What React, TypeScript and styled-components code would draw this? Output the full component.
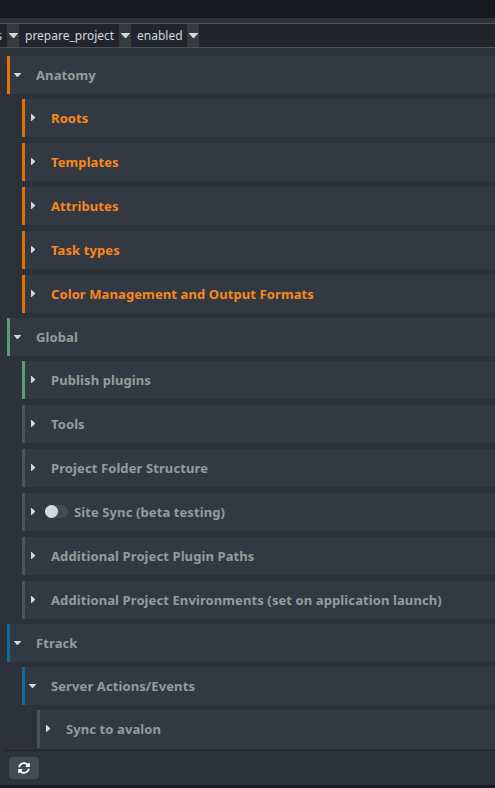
import React from "react";
import styled, { createGlobalStyle } from "styled-components";

const tones = {
  orange: "#e67300",
  green: "#56a06f",
  grey: "#4e5254",
  blue: "#106aa2",
};
type Tone = keyof typeof tones;

const GlobalStyle = createGlobalStyle`
  * { box-sizing: border-box; }
  body {
    margin: 0;
    overflow: hidden;
    background: #2c313a;
    font-family: "Noto Sans", sans-serif;
  }
`;

const Window = styled.div`
  display: flex;
  flex-direction: column;
  width: 495px;
  height: 788px;
  overflow: hidden;
  background: #2c313a;
`;

const TopStrip = styled.div`
  flex: none;
  height: 18px;
  background: #161920;
`;

const Breadcrumbs = styled.nav`
  flex: none;
  display: flex;
  height: 25px;
  margin-top: 5px;
  border: solid #4e5254;
  border-width: 1px 0;
  background: #21252b;
  color: #d3d8de;
  font-size: 12px;
  line-height: 23px;
`;

const Crumb = styled.span<{ $width: number; $clipped?: boolean }>`
  flex: none;
  display: flex;
  justify-content: ${(p) => (p.$clipped ? "flex-end" : "flex-start")};
  width: ${(p) => p.$width}px;
  padding: ${(p) => (p.$clipped ? "0 5px 0 0" : "0 0 0 6px")};
  white-space: nowrap;
`;

const CrumbMenu = styled.button`
  flex: none;
  display: flex;
  align-items: center;
  justify-content: center;
  width: 12px;
  height: 23px;
  padding: 0 0 0 1px;
  border: 0;
  background: #373a3d;
`;

const Tree = styled.main`
  flex: none;
  display: flex;
  flex-direction: column;
  gap: 5px;
  padding: 8px 0 2px 7px;
`;

const Group = styled.section`
  display: flex;
  flex-direction: column;
  gap: 5px;
`;

const Children = styled.div<{ $gap?: number }>`
  display: flex;
  flex-direction: column;
  gap: ${(p) => p.$gap ?? 6}px;
  padding-left: 15px;
`;

const Row = styled.div<{ $tone: Tone }>`
  display: flex;
  align-items: center;
  height: 38px;
  border-left: 3px solid ${(p) => tones[p.$tone]};
  background: #333942;
`;

const ArrowSlot = styled.span<{ $open?: boolean }>`
  flex: none;
  display: flex;
  width: ${(p) => (p.$open ? 22 : 20)}px;
  margin-left: ${(p) => (p.$open ? 4 : 6)}px;
  padding-bottom: ${(p) => (p.$open ? 0 : 1)}px;
`;

const Label = styled.span<{ $changed?: boolean }>`
  color: ${(p) => (p.$changed ? "#f9881c" : "#969b9e")};
  font-size: 13px;
  font-weight: 700;
  line-height: 18px;
  letter-spacing: 0.1px;
  white-space: nowrap;
`;

const Toggle = styled.span`
  flex: none;
  display: flex;
  width: 23px;
  height: 13px;
  margin: 0 6px 1px -6px;
  border-radius: 7px;
  background: #434a56;

  &::before {
    content: "";
    width: 13px;
    height: 13px;
    border-radius: 50%;
    background: #d3d8e0;
  }
`;

const Footer = styled.footer`
  flex: none;
  height: 35px;
  margin-left: 4px;
  padding: 6px 5px;
  border-top: 1px solid #21252b;
`;

const RefreshButton = styled.button`
  display: flex;
  align-items: center;
  justify-content: center;
  width: 30px;
  height: 22px;
  padding: 0;
  border: 0;
  border-radius: 3px;
  background: #434a56;
`;

const BottomStrip = styled.div`
  flex: 1;
  background: #161920;
`;

const CrumbArrow = () => (
  <svg width="9" height="5" viewBox="0 0 9 5">
    <path d="M0 0h9v.5L5 5H4L0 .5z" fill="#d3d8e0" />
  </svg>
);

const Arrow = ({ open }: { open?: boolean }) => (
  <ArrowSlot $open={open}>
    {open ? (
      <svg width="7" height="4" viewBox="0 0 7 4">
        <path d="M0 0h7v.6L3.9 4h-.8L0 .6z" fill="#d3d8e0" />
      </svg>
    ) : (
      <svg width="4" height="7" viewBox="0 0 4 7">
        <path d="M0 0v7h.6L4 3.9v-.8L.6 0z" fill="#d3d8e0" />
      </svg>
    )}
  </ArrowSlot>
);

interface ItemProps {
  label: string;
  tone: Tone;
  open?: boolean;
  changed?: boolean;
  toggle?: boolean;
}

const Item = ({ label, tone, open, changed, toggle }: ItemProps) => (
  <Row $tone={tone}>
    <Arrow open={open} />
    {toggle && <Toggle role="switch" aria-checked={false} />}
    <Label $changed={changed}>{label}</Label>
  </Row>
);

const anatomy = [
  "Roots",
  "Templates",
  "Attributes",
  "Task types",
  "Color Management and Output Formats",
];

const globals: ItemProps[] = [
  { label: "Publish plugins", tone: "green" },
  { label: "Tools", tone: "grey" },
  { label: "Project Folder Structure", tone: "grey" },
  { label: "Site Sync (beta testing)", tone: "grey", toggle: true },
  { label: "Additional Project Plugin Paths", tone: "grey" },
  {
    label: "Additional Project Environments (set on application launch)",
    tone: "grey",
  },
];

export default function App() {
  return (
    <Window>
      <GlobalStyle />
      <TopStrip />
      <Breadcrumbs>
        <Crumb $width={7} $clipped>s</Crumb>
        <CrumbMenu><CrumbArrow /></CrumbMenu>
        <Crumb $width={100}>prepare_project</Crumb>
        <CrumbMenu><CrumbArrow /></CrumbMenu>
        <Crumb $width={56}>enabled</Crumb>
        <CrumbMenu><CrumbArrow /></CrumbMenu>
      </Breadcrumbs>
      <Tree>
        <Group>
          <Item label="Anatomy" tone="orange" open />
          <Children>
            {anatomy.map((label) => (
              <Item key={label} label={label} tone="orange" changed />
            ))}
          </Children>
        </Group>
        <Group>
          <Item label="Global" tone="green" open />
          <Children>
            {globals.map((item) => (
              <Item key={item.label} {...item} />
            ))}
          </Children>
        </Group>
        <Group>
          <Item label="Ftrack" tone="blue" open />
          <Children $gap={5}>
            <Item label="Server Actions/Events" tone="blue" open />
            <Children>
              <Item label="Sync to avalon" tone="grey" />
            </Children>
          </Children>
        </Group>
      </Tree>
      <Footer>
        <RefreshButton aria-label="Refresh">
          <svg width="12" height="12" viewBox="0 0 512 512" fill="#fff">
            <path d="M370.72 133.28C339.458 104.008 298.888 87.962 255.848 88c-77.458.068-144.328 53.178-162.791 126.85-1.344 5.363-6.122 9.15-11.651 9.15H24.103c-7.498 0-13.194-6.807-11.807-14.176C33.933 94.924 134.813 8 256 8c66.448 0 126.791 26.136 171.315 68.685L463.03 40.97C478.149 25.851 504 36.559 504 57.941V192c0 13.255-10.745 24-24 24H345.941c-21.382 0-32.09-25.851-16.971-40.971l41.75-41.749zM32 296h134.059c21.382 0 32.09 25.851 16.971 40.971l-41.75 41.75c31.262 29.273 71.835 45.319 114.876 45.28 77.418-.07 144.315-53.144 162.787-126.849 1.344-5.363 6.122-9.15 11.651-9.15h57.304c7.498 0 13.194 6.807 11.807 14.176C478.067 417.076 377.187 504 256 504c-66.448 0-126.791-26.136-171.315-68.685L48.97 471.03C33.851 486.149 8 475.441 8 454.059V320c0-13.255 10.745-24 24-24z" />
          </svg>
        </RefreshButton>
      </Footer>
      <BottomStrip />
    </Window>
  );
}
